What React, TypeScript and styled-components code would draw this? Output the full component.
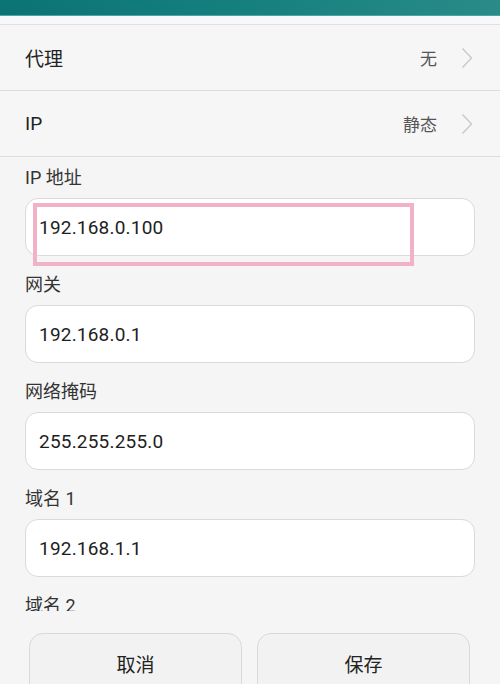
import styled, { createGlobalStyle } from 'styled-components';

const GlobalStyle = createGlobalStyle`
  html, body {
    margin: 0;
    padding: 0;
    background: #f5f5f5;
  }
  body {
    font-family: Roboto, "Noto Sans CJK SC", sans-serif;
    color: #222;
  }
  * {
    box-sizing: border-box;
  }
`;

interface Field {
  label: string;
  value: string;
  marked?: boolean;
}

const fields: Field[] = [
  { label: 'IP 地址', value: '192.168.0.100', marked: true },
  { label: '网关', value: '192.168.0.1' },
  { label: '网络掩码', value: '255.255.255.0' },
  { label: '域名 1', value: '192.168.1.1' },
  { label: '域名 2', value: '' },
];

const Chevron = () => (
  <svg width="12" height="22" viewBox="0 0 12 22">
    <path d="M1.5 1.5 L10.5 11 L1.5 20.5" fill="none" stroke="#c9c9c9" strokeWidth="1.4" />
  </svg>
);

export default function App() {
  return (
    <Page>
      <GlobalStyle />
      <TopBar />
      <Strip />
      <Row>
        <RowTitle>代理</RowTitle>
        <RowValue>无</RowValue>
        <Chevron />
      </Row>
      <Row>
        <RowTitle>IP</RowTitle>
        <RowValue>静态</RowValue>
        <Chevron />
      </Row>
      <Scroll>
        {fields.map((f) => (
          <FieldBlock key={f.label}>
            <Label>{f.label}</Label>
            <InputBox>
              <InputText>{f.value}</InputText>
              {f.marked && <Mark />}
            </InputBox>
          </FieldBlock>
        ))}
      </Scroll>
      <Buttons>
        <Button>取消</Button>
        <Button>保存</Button>
      </Buttons>
    </Page>
  );
}

const Page = styled.div`
  width: 500px;
  height: 684px;
  overflow: hidden;
  display: flex;
  flex-direction: column;
  background: #f5f5f5;
`;

const TopBar = styled.div`
  height: 16px;
  flex: none;
  background: linear-gradient(90deg, #0c7374 0%, #16807f 50%, #2a8b88 100%);
  border-bottom: 1px solid #4aa5a3;
`;

const Strip = styled.div`
  height: 9px;
  flex: none;
  background: #f6f8f9;
  border-bottom: 1px solid #e6dfe0;
`;

const Row = styled.div`
  height: 66px;
  flex: none;
  display: flex;
  align-items: center;
  padding: 0 27px 0 25px;
  border-bottom: 1px solid #dcdcdc;
  background: #f6f6f6;
`;

const RowTitle = styled.div`
  flex: 1;
  font-size: 19px;
  color: #222;
`;

const RowValue = styled.div`
  font-size: 17px;
  color: #555;
  margin-right: 24px;
`;

const Scroll = styled.div`
  height: 454px;
  flex: none;
  overflow: hidden;
  padding: 8px 25px 0 25px;
  display: flex;
  flex-direction: column;
  gap: 16px;
`;

const FieldBlock = styled.div`
  flex: none;
  display: flex;
  flex-direction: column;
  gap: 7px;
`;

const Label = styled.div`
  height: 26px;
  line-height: 26px;
  font-size: 18px;
  color: #333;
`;

const InputBox = styled.div`
  position: relative;
  height: 58px;
  background: #fff;
  border: 1px solid #dadada;
  border-radius: 13px;
  display: flex;
  align-items: center;
  padding-left: 13px;
`;

const InputText = styled.span`
  font-size: 19px;
  color: #1e1e1e;
  letter-spacing: 0.2px;
`;

const Mark = styled.div`
  position: absolute;
  left: 7px;
  top: 4px;
  width: 381px;
  height: 63px;
  border: 4px solid #f1b2c7;
  pointer-events: none;
`;

const Buttons = styled.div`
  flex: 1;
  display: flex;
  gap: 15px;
  padding: 22px 30px 0 29px;
`;

const Button = styled.div`
  flex: 1;
  height: 70px;
  background: #f2f2f2;
  border: 1px solid #d9d9d9;
  border-radius: 14px;
  display: flex;
  justify-content: center;
  padding-top: 16px;
  font-size: 19px;
  color: #222;
`;
